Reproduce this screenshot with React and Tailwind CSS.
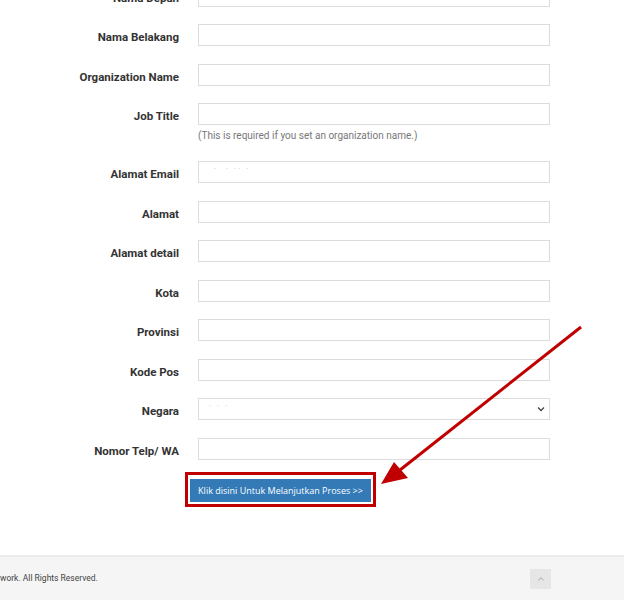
import { ChevronUp } from 'lucide-react';

const fields = [
    { label: 'Nama Depan' },
    { label: 'Nama Belakang' },
    { label: 'Organization Name' },
    { label: 'Job Title', help: '(This is required if you set an organization name.)' },
    { label: 'Alamat Email', value: '·     ·   · ·   ·' },
    { label: 'Alamat' },
    { label: 'Alamat detail' },
    { label: 'Kota' },
    { label: 'Provinsi' },
    { label: 'Kode Pos' },
    { label: 'Negara', select: true },
    { label: 'Nomor Telp/ WA' },
];

function Field({ f }) {
    return (
        <div className="flex mb-[17.5px]">
            <label className="w-[180px] pr-[1px] pt-[6px] shrink-0 h-[22px] flex items-center justify-end text-[11.5px] font-bold text-[#333] whitespace-nowrap">
                {f.label}
            </label>
            <div className="ml-[18px] w-[352px]">
                {f.select ? (
                    <div className="h-[22px] border border-[#dcdcdc] bg-white flex items-center justify-between pl-[10px] pr-[4px]">
                        <span className="text-[8px] text-[#c8c8c8] tracking-[2px] -mt-[6px]">·  ·   ·</span>
                        <svg width="8" height="6" viewBox="0 0 8 6">
                            <path d="M1 1.5 L4 4.5 L7 1.5" fill="none" stroke="#444" strokeWidth="1.3" />
                        </svg>
                    </div>
                ) : (
                    <div className="h-[22px] border border-[#dcdcdc] bg-white flex items-center pl-[15px]">
                        {f.value && (
                            <span className="text-[8px] text-[#bbb] -mt-[6px] whitespace-pre">{f.value}</span>
                        )}
                    </div>
                )}
                {f.help && (
                    <p className="mt-[4px] h-[14.5px] text-[10px] text-[#777] leading-[14px]">
                        {f.help}
                    </p>
                )}
            </div>
        </div>
    );
}

export default function App() {
    return (
        <div className="relative w-[624px] h-[600px] overflow-hidden bg-white font-['Roboto','Liberation_Sans',sans-serif]">

            {/* ─── Form ─────────────────────────────── */}
            <div className="-mt-[15.5px]">
                {fields.map((f) => (
                    <Field key={f.label} f={f} />
                ))}
            </div>

            {/* ─── Submit ───────────────────────────── */}
            <div className="flex pl-[185px] -mt-[5.5px]">
                <div className="border-[3px] border-[#c00000] p-[2px]">
                    <button className="w-[181px] h-[23px] bg-[#337ab7] text-white text-[9px] font-['Open_Sans','Liberation_Sans',sans-serif] leading-none">
                        Klik disini Untuk Melanjutkan Proses &gt;&gt;
                    </button>
                </div>
            </div>

            {/* ─── Footer ───────────────────────────── */}
            <footer className="mt-[48px] h-[46px] border-t-2 border-[#ececec] bg-[#f5f5f5] flex items-center justify-between pr-[73px]">
                <span className="text-[8.5px] text-[#444]">work. All Rights Reserved.</span>
                <span className="w-[21px] h-[20px] bg-[#e6e6e6] flex items-center justify-center">
                    <ChevronUp size={10} color="#999" strokeWidth={2} />
                </span>
            </footer>

            {/* ─── Arrow overlay ────────────────────── */}
            <svg className="absolute left-0 top-0 pointer-events-none" width="624" height="600">
                <line x1="581" y1="327" x2="400" y2="470" stroke="#c00000" strokeWidth="3" />
                <polygon points="381,484 394,462 408,478" fill="#c00000" />
            </svg>
        </div>
    );
}
